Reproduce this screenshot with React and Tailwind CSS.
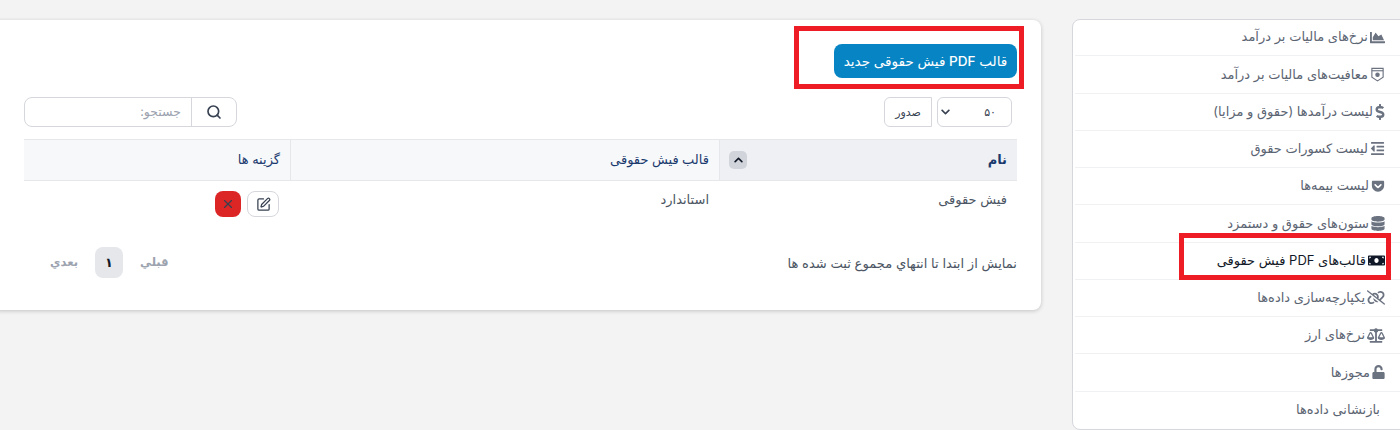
import React from 'react';
import { FaChartArea, FaDollarSign, FaOutdent, FaGetPocket, FaDatabase, FaMoneyBill, FaBalanceScale, FaUnlock, FaChevronDown, FaChevronUp } from 'react-icons/fa';
import { FaLinkSlash } from 'react-icons/fa6';
import { Search, SquarePen, X } from 'lucide-react';

function ShieldIcon({ className }) {
  return (
    <svg viewBox="0 0 16 16" className={className} fill="none" stroke="currentColor" strokeWidth="1.2">
      <path d="M2 1.5h12v9.5L8 14.8 2 11z" />
      <path d="M2 4h12" />
      <circle cx="8" cy="8.2" r="1.8" fill="currentColor" />
    </svg>
  );
}

const menuItems = [
  { label: 'نرخ‌های مالیات بر درآمد', Icon: FaChartArea, size: 'h-[15px] w-[15px]' },
  { label: 'معافیت‌های مالیات بر درآمد', Icon: ShieldIcon, size: 'h-[15px] w-[15px]' },
  { label: 'لیست درآمدها (حقوق و مزایا)', Icon: FaDollarSign, size: 'h-[16px] w-[10px]' },
  { label: 'لیست کسورات حقوق', Icon: FaOutdent, size: 'h-[15px] w-[15px]' },
  { label: 'لیست بیمه‌ها', Icon: FaGetPocket, size: 'h-[14px] w-[14px]' },
  { label: 'ستون‌های حقوق و دستمزد', Icon: FaDatabase, size: 'h-[15px] w-[14px]' },
  { label: 'قالب‌های PDF فیش حقوقی', Icon: FaMoneyBill, size: 'h-[15px] w-[17px]', active: true },
  { label: 'یکپارچه‌سازی داده‌ها', Icon: FaLinkSlash, size: 'h-[15px] w-[18px]' },
  { label: 'نرخ‌های ارز', Icon: FaBalanceScale, size: 'h-[15px] w-[18px]' },
  { label: 'مجوزها', Icon: FaUnlock, size: 'h-[14px] w-[13px]' },
  { label: 'بازنشانی داده‌ها', indent: true },
];

export default function App() {
  return (
    <div dir="rtl" className="h-[430px] w-[1400px] overflow-hidden bg-[#f3f3f3] font-['Inter','DejaVu_Sans',sans-serif] text-[13px] text-[#5b6472] flex items-start">
      {/* side menu */}
      <div className="relative mr-[-9px] mt-[19px] w-[337px] h-[411px] shrink-0 rounded-[8px] border border-[#d5d7dc] bg-white px-[2px]">
        <div className="-mt-px">
          {menuItems.map(({ label, Icon, size, active, indent }, i) => (
            <div
              key={label}
              className={`flex h-[37.25px] items-center gap-[2px] border-[#f0f1f3] ${i < menuItems.length - 1 ? 'border-b' : ''} ${active ? 'text-[#111827]' : ''} ${indent ? 'pr-[26px]' : 'pr-[21px]'}`}
            >
              {Icon && <Icon className={`${size} shrink-0 ${active ? 'text-[#111827]' : 'text-[#6b7280]'}`} />}
              <span className="whitespace-nowrap">{label}</span>
            </div>
          ))}
        </div>
        <div className="absolute right-[17px] top-[213px] h-[47px] w-[212px] border-[5px] border-[#ee1c25]" />
      </div>

      {/* main card */}
      <div className="relative mr-[31px] mt-[20px] h-[290px] w-[1050px] shrink-0 rounded-[8px] bg-white pr-[24px] pl-[33px] shadow-[0_1px_4px_rgba(0,0,0,0.2)]">
        <div className="flex pt-[24px]">
          <button className="h-[34px] w-[183px] rounded-[8px] bg-[#0784c3] text-[13.6px] font-medium text-white whitespace-nowrap">قالب PDF فیش حقوقی جدید</button>
        </div>
        <div className="absolute right-[17px] top-[6px] h-[63px] w-[230px] border-[5px] border-[#ee1c25]" />

        <div className="mt-[19px] flex h-[30px] items-center justify-between">
          <div className="flex items-center gap-[5px] pr-[5px]">
            <div className="flex h-[30px] w-[75px] items-center justify-between rounded-[6px] border border-[#d5d7dc] pr-[15px] pl-[2px] text-[#374151]">
              <span className="text-[11px] whitespace-nowrap">۵۰</span>
              <FaChevronDown className="h-[10px] w-[11px]" />
            </div>
            <button className="h-[30px] w-[48px] rounded-l-[6px] rounded-r-[0px] border border-[#d5d7dc] text-[11px] text-[#374151]">صدور</button>
          </div>
          <div className="flex h-[30px] w-[213px] rounded-[8px] border border-[#d5d7dc] bg-white">
            <div className="flex w-[45px] items-center justify-center border-l border-[#d5d7dc] text-[#374151]">
              <Search className="h-[16px] w-[16px]" strokeWidth={2.5} />
            </div>
            <div className="flex flex-1 items-center pr-[10px] text-[12.5px] text-[#9ca3af]">جستجو:</div>
          </div>
        </div>

        <div className="mt-[12px] flex h-[42px] border-y border-[#e5e7eb] text-[13px] font-medium text-[#1a3a6e]">
          <div className="flex w-[298px] items-center justify-between border-l border-[#e5e7eb] bg-[#eff0f3] pr-[10px] pl-[9px]">
            <span className="font-bold">نام</span>
            <span className="flex h-[18px] w-[18px] items-center justify-center rounded-[5px] bg-[#d1d5db] text-[#111827]"><FaChevronUp className="h-[10px] w-[11px]" /></span>
          </div>
          <div className="flex w-[429px] items-center border-l border-[#e5e7eb] bg-[#f7f8fa] pr-[10px]">قالب فیش حقوقی</div>
          <div className="flex flex-1 items-center bg-[#f7f8fa] pr-[10px]">گزینه ها</div>
        </div>
        <div className="flex h-[46px] items-center text-[13px] text-[#4b5563]">
          <div className="w-[298px] pr-[10px] pb-[8px]">فیش حقوقی</div>
          <div className="w-[429px] pr-[10px] pb-[8px]">استاندارد</div>
          <div className="flex flex-1 items-center gap-[6px] pr-[11px]">
            <span className="flex h-[26px] w-[32px] items-center justify-center rounded-[8px] border border-[#d5d7dc] text-[#374151]"><SquarePen className="h-[15px] w-[15px]" strokeWidth={2} /></span>
            <span className="flex h-[26px] w-[26px] items-center justify-center rounded-[8px] bg-[#dc2626] text-[#374151]"><X className="h-[14px] w-[14px]" strokeWidth={2} /></span>
          </div>
        </div>

        <div className="mt-[20px] flex items-center justify-between text-[13.1px]">
          <span className="mt-[3px] text-[#4b5563]">نمايش از ابتدا تا انتهاي مجموع ثبت شده ها</span>
          <div className="flex items-center gap-[17px] pl-[26px] text-[11.5px] font-bold text-[#9ca3af]">
            <span>قبلي</span>
            <span className="flex h-[31px] w-[28px] items-center justify-center rounded-[8px] bg-[#e5e7eb] text-[13px] text-[#111827]">۱</span>
            <span>بعدي</span>
          </div>
        </div>
      </div>
    </div>
  );
}
